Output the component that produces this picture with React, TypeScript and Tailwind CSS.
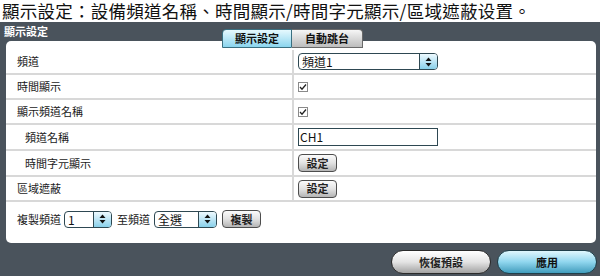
import React from 'react';

const font = "font-['Noto_Sans_CJK_TC','Noto_Sans',sans-serif]";

function Spinner() {
  return (
    <svg width="7" height="10" viewBox="0 0 7 10">
      <path d="M3.5 0.5 L6.5 4 L0.5 4 Z" fill="#111" />
      <path d="M0.5 6 L6.5 6 L3.5 9.5 Z" fill="#111" />
    </svg>
  );
}

function Select({ value, width }: { value: string; width: string }) {
  return (
    <div className={`flex h-[17px] ${width} shrink-0 overflow-hidden rounded-[4px] border border-[#2e4852] bg-white`}>
      <span className="flex-1 whitespace-nowrap pl-[3px] text-[12px] leading-[15px] text-[#111]">{value}</span>
      <span className="flex w-[18px] items-center justify-center border-l border-[#2e4852] bg-gradient-to-b from-[#eefaff] to-[#88d0ea]">
        <Spinner />
      </span>
    </div>
  );
}

function Check() {
  return (
    <div className="flex h-[10px] w-[10px] items-center justify-center border border-[#8a8a8a] bg-white">
      <svg width="8" height="8" viewBox="0 0 8 8">
        <path d="M1 4 L3 6.2 L7 1.5" fill="none" stroke="#222" strokeWidth="1.3" />
      </svg>
    </div>
  );
}

function SmallButton({ label }: { label: string }) {
  return (
    <div className="flex h-[18px] w-[39px] shrink-0 items-center justify-center rounded-[4px] border border-[#4d4d4d] bg-gradient-to-b from-[#fbfbfb] via-[#e2e2e2] to-[#b5b5b5] text-[11px] font-bold text-[#222]">
      {label}
    </div>
  );
}

type Row = { label: string; indent?: boolean; h: string; value: React.ReactNode };

const rows: Row[] = [
  { label: '頻道', h: 'h-[25px]', value: <Select value="頻道1" width="w-[140px]" /> },
  { label: '時間顯示', h: 'h-[25px]', value: <Check /> },
  { label: '顯示頻道名稱', h: 'h-[25px]', value: <Check /> },
  {
    label: '頻道名稱',
    indent: true,
    h: 'h-[26px]',
    value: (
      <div className="h-[18px] w-[140px] border border-[#2e4852] bg-white pl-[1px] text-[12px] leading-[16px] text-[#111]">CH1</div>
    ),
  },
  { label: '時間字元顯示', indent: true, h: 'h-[26px]', value: <SmallButton label="設定" /> },
  { label: '區域遮蔽', h: 'h-[25px]', value: <SmallButton label="設定" /> },
];

export default function App() {
  return (
    <div className={`flex h-[276px] w-[600px] flex-col bg-white ${font}`}>
      <div className="h-[22px] whitespace-nowrap pl-[2px] text-[17.5px] leading-[22px] tracking-[0.25px] text-[#111]">
        顯示設定：設備頻道名稱、時間顯示/時間字元顯示/區域遮蔽设置。
      </div>
      <div className="flex flex-1 flex-col bg-[#4a535c] pl-[6px] pr-[3px]">
        <div className="relative h-[19px]">
          <span className="absolute left-[-2px] top-[3px] text-[11px] font-bold leading-[12px] text-white">顯示設定</span>
          <div className="absolute left-[216px] top-[7px] z-10 flex h-[19px]">
            <div className="flex w-[70px] items-center justify-center rounded-tl-[4px] border border-[#3a6f80] bg-gradient-to-b from-[#e6f9fe] to-[#8ad5ee] text-[11px] font-bold text-[#111]">
              顯示設定
            </div>
            <div className="flex w-[71px] items-center justify-center rounded-tr-[4px] border border-l-0 border-[#6a6a6a] bg-gradient-to-b from-[#f6f6f6] to-[#bdbdbd] text-[11px] font-bold text-[#111]">
              自動跳台
            </div>
          </div>
        </div>
        <div className="mr-[1px] flex h-[202px] flex-col rounded-[5px] bg-white pt-[9px]">
          {rows.map((r) => (
            <div key={r.label} className={`flex ${r.h} border-b-2 border-[#d8d8d8]`}>
              <div
                className={`flex w-[288px] items-center border-r-2 border-[#d8d8d8] text-[11px] text-[#1a1a1a] ${
                  r.indent ? 'pl-[19px]' : 'pl-[11px]'
                }`}
              >
                {r.label}
              </div>
              <div className="flex items-center pl-[4px]">{r.value}</div>
            </div>
          ))}
          <div className="flex items-center whitespace-nowrap pl-[11px] pt-[8px] text-[11px] text-[#1a1a1a]">
            <span>複製頻道</span>
            <div className="ml-[3px]">
              <Select value="1" width="w-[48px]" />
            </div>
            <span className="ml-[5px]">至頻道</span>
            <div className="ml-[4px]">
              <Select value="全選" width="w-[63px]" />
            </div>
            <div className="ml-[5px]">
              <SmallButton label="複製" />
            </div>
          </div>
        </div>
        <div className="mt-[7px] flex justify-end gap-[6px]">
          <div className="flex h-[24px] w-[100px] items-center justify-center rounded-full border border-[#2a2a2a] bg-gradient-to-b from-[#ffffff] via-[#e4e4e4] to-[#a3a3a3] text-[11px] font-bold text-[#222]">
            恢復預設
          </div>
          <div className="flex h-[24px] w-[100px] items-center justify-center rounded-full border border-[#1f3f4a] bg-gradient-to-b from-[#dff7fd] via-[#8fd6ee] to-[#3f9dbd] text-[11px] font-bold text-[#111]">
            應用
          </div>
        </div>
      </div>
    </div>
  );
}
